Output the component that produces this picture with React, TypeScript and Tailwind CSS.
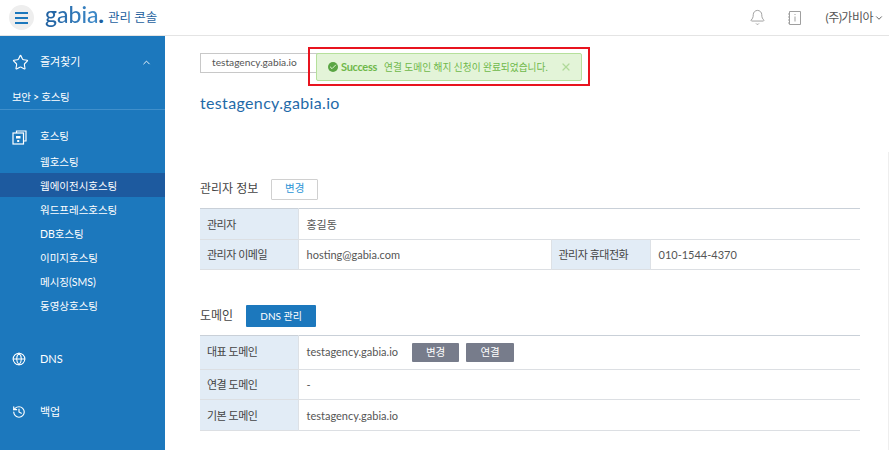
import { Star, ChevronUp, ChevronDown, Bell, Globe, History, Check, X } from "lucide-react"

const FONT = "font-['Lato','Noto_Sans_CJK_KR',sans-serif]"

const subMenus = ["웹호스팅", "웹에이전시호스팅", "워드프레스호스팅", "DB호스팅", "이미지호스팅", "메시징(SMS)", "동영상호스팅"]

function HostingIcon() {
  return (
    <svg width="15" height="15" viewBox="0 0 15 15" fill="none" stroke="white" strokeWidth="1.2">
      <path d="M4.5 3V1h9.5v10h-2" />
      <rect x="1" y="3" width="10.5" height="11" />
      <rect x="4" y="6" width="4.5" height="2.5" fill="white" stroke="none" />
      <rect x="5.2" y="10" width="2" height="2" fill="white" stroke="none" />
    </svg>
  )
}

function Sidebar() {
  return (
    <aside className="w-[165px] shrink-0 bg-[#1c78bd] text-white flex flex-col">
      <div className="h-[50px] flex items-center pl-[12px] pr-[13px] pt-[2px]">
        <Star size={17} strokeWidth={1.6} className="mr-[11px]" />
        <span className="text-[11px] flex-1">즐겨찾기</span>
        <ChevronUp size={11} strokeWidth={2} />
      </div>
      <div className="h-[23px] flex items-center pl-[12px] text-[10.5px] tracking-[-0.3px]">보안 &gt; 호스팅</div>
      <div className="h-px bg-[#3f8fcb]" />
      <div className="h-[26px] mt-[13px] pt-[2px] flex items-center pl-[12px] text-[10.5px]">
        <span className="w-[28px]"><HostingIcon /></span>
        <span>호스팅</span>
      </div>
      <ul className="text-[10.5px]">
        {subMenus.map((name, i) => (
          <li key={name} className={`h-[24px] leading-[26px] pl-[40px] ${i === 1 ? "bg-[#1d5a9f]" : ""}`}>{name}</li>
        ))}
      </ul>
      <div className="mt-[30px] flex items-center pl-[12px] text-[11px] h-[24px]">
        <Globe size={14} strokeWidth={1.8} className="mr-[14px]" />
        <span>DNS</span>
      </div>
      <div className="mt-[29px] flex items-center pl-[12px] text-[11px] h-[24px]">
        <History size={14} strokeWidth={2} className="mr-[14px]" />
        <span>백업</span>
      </div>
    </aside>
  )
}

function Header() {
  return (
    <header className="h-[36px] shrink-0 border-b border-[#e4e4e4] flex items-center pl-[9px] pr-[5px] bg-white">
      <button className="w-[25px] h-[25px] rounded-full bg-[#eeeeee] flex flex-col items-center justify-center gap-[3px]">
        <span className="block w-[13px] h-[2px] bg-[#1c78bd]" />
        <span className="block w-[13px] h-[2px] bg-[#1c78bd]" />
        <span className="block w-[13px] h-[2px] bg-[#1c78bd]" />
      </button>
      <span className="ml-[11px] w-[56px] text-[23px] leading-[28px] font-medium whitespace-nowrap text-transparent bg-clip-text bg-gradient-to-r from-[#1f5f9f] to-[#3f8ccb] -mt-[7px]">
        gabia<span className="font-bold text-[#1f5f9f]">.</span>
      </span>
      <span className="ml-[7px] text-[12.5px] text-[#1d5f9e] mt-[1px]">관리 콘솔</span>
      <div className="ml-auto flex items-center">
        <Bell size={17} strokeWidth={1.3} className="text-[#9a9a9a]" />
        <svg width="16" height="16" viewBox="0 0 16 16" fill="none" stroke="#9f9f9f" strokeWidth="1" className="ml-[21px]">
          <path d="M2.5 1.5h11v13h-11z" />
          <path d="M1 4h2M1 7h2M1 10h2M1 13h2M8 6.5v5" />
          <path d="M8 4v1" />
        </svg>
        <span className="ml-[22px] text-[12px] tracking-[-0.5px] text-[#555]">(주)가비아</span>
        <ChevronDown size={10} strokeWidth={2} className="ml-[1px] text-[#444]" />
      </div>
    </header>
  )
}

function Th({ children, className = "" }: { children: React.ReactNode; className?: string }) {
  return <th className={`bg-[#e2ecf6] border-r border-[#dde1e6] text-left font-normal text-[11px] tracking-[-0.5px] text-[#444] pl-[7px] ${className}`}>{children}</th>
}

function Td({ children, colSpan }: { children: React.ReactNode; colSpan?: number }) {
  return <td colSpan={colSpan} className="pl-[8px] text-[11px] text-[#555]">{children}</td>
}

function GrayButton({ children, width }: { children: React.ReactNode; width: string }) {
  return <button className={`${width} h-[19px] bg-[#777c8b] text-white text-[10.5px] rounded-[1px]`}>{children}</button>
}

function Content() {
  return (
    <main className="flex-1 pl-[35px] pr-[29px] relative">
      <div className="mt-[17px] w-[121px] h-[20px] border border-[#c8c8c8] flex items-center pl-[11px] text-[10.2px] text-[#555]">testagency.gabia.io</div>
      <h1 className="mt-[19px] text-[16px] leading-[22px] text-[#1f6aa8] tracking-[0.35px]">testagency.gabia.io</h1>

      <div className="mt-[64px] flex items-center h-[22px]">
        <h2 className="text-[12px] text-[#444] font-normal">관리자 정보</h2>
        <button className="ml-[13px] w-[47px] h-[21px] border border-[#d0d0d0] text-[#2b95d6] text-[10.5px] rounded-[1px]">변경</button>
      </div>
      <table className="mt-[8px] w-full border-collapse border-t border-[#c9d0d8] table-fixed">
        <colgroup>
          <col className="w-[98px]" />
          <col className="w-[253px]" />
          <col className="w-[99px]" />
          <col />
        </colgroup>
        <tbody>
          <tr className="h-[31px] border-b border-[#dcdfe3] [&>*]:pt-[2px]">
            <Th>관리자</Th>
            <Td colSpan={3}>홍길동</Td>
          </tr>
          <tr className="h-[30px] border-b border-[#dcdfe3] [&>*]:pt-[2px]">
            <Th>관리자 이메일</Th>
            <Td>hosting@gabia.com</Td>
            <Th className="border-l">관리자 휴대전화</Th>
            <Td>010-1544-4370</Td>
          </tr>
        </tbody>
      </table>

      <div className="mt-[35px] flex items-center h-[22px]">
        <h2 className="text-[12px] text-[#444] font-normal">도메인</h2>
        <button className="ml-[13px] w-[70px] h-[22px] bg-[#1c78bd] text-white text-[10px] rounded-[1px]">DNS 관리</button>
      </div>
      <table className="mt-[8px] w-full border-collapse border-t border-[#c9d0d8] table-fixed">
        <colgroup>
          <col className="w-[98px]" />
          <col />
        </colgroup>
        <tbody>
          <tr className="h-[34px] border-b border-[#dcdfe3]">
            <Th>대표 도메인</Th>
            <Td>
              <div className="flex items-center">
                <span>testagency.gabia.io</span>
                <span className="ml-[14px] flex gap-[7px]">
                  <GrayButton width="w-[47px]">변경</GrayButton>
                  <GrayButton width="w-[48px]">연결</GrayButton>
                </span>
              </div>
            </Td>
          </tr>
          <tr className="h-[30px] border-b border-[#dcdfe3] [&>*]:pt-[2px]">
            <Th>연결 도메인</Th>
            <Td>-</Td>
          </tr>
          <tr className="h-[31px] border-b border-[#dcdfe3] [&>*]:pt-[2px]">
            <Th>기본 도메인</Th>
            <Td>testagency.gabia.io</Td>
          </tr>
        </tbody>
      </table>

      {/* Success toast with the red annotation box round it */}
      <div className="absolute left-[143px] top-[11px] w-[282px] h-[39px] border-[2px] border-[#e8141f] pt-[4px] pl-[6px]">
        <div className="w-[266px] h-[28px] bg-[#e3f4d8] border border-[#b5e09b] rounded-[2px] flex items-center pl-[11px] text-[9.7px] text-[#6fb84a] whitespace-nowrap">
          <span className="w-[10px] h-[10px] rounded-full bg-[#5aa544] flex items-center justify-center">
            <Check size={8} strokeWidth={3} className="text-[#e3f4d8]" />
          </span>
          <strong className="ml-[3px] text-[11px] font-bold tracking-[-0.3px]">Success</strong>
          <span className="ml-[7px]">연결 도메인 해지 신청이 완료되었습니다.</span>
          <X size={12} strokeWidth={2.5} className="ml-[12px] text-[#b0d99a]" />
        </div>
      </div>

      {/* Edge of the page's scroll track */}
      <div className="absolute right-0 top-[116px] bottom-0 w-px bg-[#eeeeee]" />
    </main>
  )
}

export default function App() {
  return (
    <div className={`w-[889px] h-[450px] overflow-hidden flex flex-col bg-white ${FONT}`}>
      <Header />
      <div className="flex-1 flex min-h-0">
        <Sidebar />
        <Content />
      </div>
    </div>
  )
}
